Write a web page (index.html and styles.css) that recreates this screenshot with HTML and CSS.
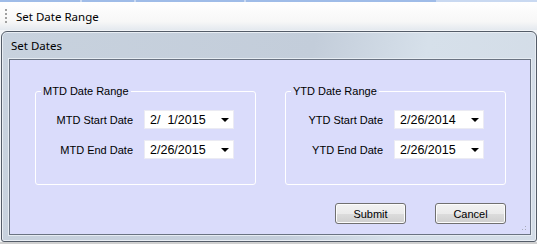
FILE: index.html
```html
<!DOCTYPE html>
<html lang="en">
<head>
    <meta charset="UTF-8">
    <meta name="viewport" content="width=device-width, initial-scale=1.0">
    <title>Set Date Range</title>
    <link rel="stylesheet" href="styles.css">
</head>
<body>
    <div class="tabline">
        <span class="tab t1"></span>
        <span class="tab t2"></span>
        <span class="tab t3"></span>
        <span class="tab t4"></span>
    </div>
    <div class="toolstrip">
        <span class="grip"></span>
        <span class="strip-label">Set Date Range</span>
    </div>

    <div class="window">
        <div class="titlebar">Set Dates</div>
        <div class="client">
            <div class="groups">
                <fieldset class="group">
                    <legend>MTD Date Range</legend>
                    <div class="row">
                        <label>MTD Start Date</label>
                        <div class="combo"><span>2/&#8199;1/2015</span><i class="arrow"></i></div>
                    </div>
                    <div class="row">
                        <label>MTD End Date</label>
                        <div class="combo"><span>2/26/2015</span><i class="arrow"></i></div>
                    </div>
                </fieldset>
                <fieldset class="group">
                    <legend>YTD Date Range</legend>
                    <div class="row">
                        <label>YTD Start Date</label>
                        <div class="combo"><span>2/26/2014</span><i class="arrow"></i></div>
                    </div>
                    <div class="row">
                        <label>YTD End Date</label>
                        <div class="combo"><span>2/26/2015</span><i class="arrow"></i></div>
                    </div>
                </fieldset>
            </div>
            <div class="actions">
                <button class="btn">Submit</button>
                <button class="btn">Cancel</button>
            </div>
            <span class="sizegrip"></span>
        </div>
    </div>
    <div class="below"></div>
</body>
</html>
```

FILE: styles.css
```css
body {
    margin: 0;
    width: 537px;
    height: 244px;
    overflow: hidden;
    background-color: #f2f4f7;
    font-family: "Liberation Sans", Arial, sans-serif;
    font-size: 11px;
}
.tabline {
    display: flex;
    height: 2px;
    background-color: #c9d9f1;
}
.tab {
    height: 2px;
    background-color: #9fbce8;
    margin-right: 2px;
}
.t1 { width: 80px; }
.t2 { width: 52px; }
.t3 { width: 108px; }
.t4 { width: 190px; }
.toolstrip {
    display: flex;
    align-items: center;
    height: 28px;
    background: linear-gradient(#ffffff, #f7f7f7 70%, #e4e9ef);
}
.grip {
    width: 2px;
    height: 15px;
    margin-left: 5px;
    margin-right: 9px;
    background: repeating-linear-gradient(#a0a0a0 0 2px, transparent 2px 4px);
}
.strip-label,
.titlebar {
    font-family: "Noto Sans", "Open Sans", sans-serif;
    font-size: 11.5px;
    color: #000;
}
.window {
    margin: 1px 0 0 1px;
    width: 536px;
    height: 211px;
    box-sizing: border-box;
    border: 1px solid #545c68;
    border-radius: 6px 6px 3px 3px;
    box-shadow: inset 0 0 0 1px #e9eef4;
    background: linear-gradient(100deg, #c8d2de 0%, #c3cdda 55%, #d6e0ea 75%, #d3dce7 100%);
    padding: 0 5px 6px 7px;
    display: flex;
    flex-direction: column;
}
.titlebar {
    height: 27px;
    line-height: 27px;
    padding-left: 2px;
}
.client {
    position: relative;
    flex: 1;
    border: 1px solid #6a7382;
    box-shadow: 0 0 0 1px #e6ecf3;
    background-color: #dadcfb;
    padding: 25px 24px 0 25px;
}
.groups {
    display: flex;
    gap: 29px;
}
.group {
    width: 221px;
    height: 100px;
    box-sizing: border-box;
    margin: 0;
    padding: 13px 0 0 0;
    border: 1px solid #ffffff;
    border-radius: 3px;
}
.group legend {
    margin-left: 5px;
    padding: 0 2px;
    font-size: 11px;
    color: #000;
}
.row {
    display: flex;
    align-items: center;
    height: 19px;
    margin-bottom: 11px;
}
.row label {
    width: 97px;
    text-align: right;
    margin-right: 11px;
    color: #000;
}
.combo {
    width: 90px;
    height: 19px;
    box-sizing: border-box;
    border: 1px solid #ebebf3;
    background-color: #ffffff;
    display: flex;
    align-items: center;
    justify-content: space-between;
    padding: 0 4px 0 5px;
    font-size: 12.5px;
}
.arrow {
    width: 0;
    height: 0;
    border-left: 4px solid transparent;
    border-right: 4px solid transparent;
    border-top: 4px solid #000;
    margin-top: 1px;
}
.actions {
    display: flex;
    justify-content: flex-end;
    gap: 29px;
    margin-top: 18px;
}
.btn {
    width: 71px;
    height: 21px;
    box-sizing: border-box;
    border: 1px solid #707070;
    border-radius: 3px;
    background: linear-gradient(#f2f2f2, #ebebeb 50%, #dddddd 51%, #cfcfcf);
    box-shadow: inset 0 0 0 1px #fcfcfc;
    font-family: "Liberation Sans", Arial, sans-serif;
    font-size: 11px;
    color: #000;
    padding: 0;
}
.sizegrip {
    position: absolute;
    right: 2px;
    bottom: 2px;
    width: 10px;
    height: 10px;
    background:
        radial-gradient(circle, #a8aab8 0.8px, transparent 1px) 0 0 / 3px 3px;
    clip-path: polygon(100% 0, 100% 100%, 0 100%);
}
.below {
    height: 2px;
    background-color: #d0d0d0;
}
```
